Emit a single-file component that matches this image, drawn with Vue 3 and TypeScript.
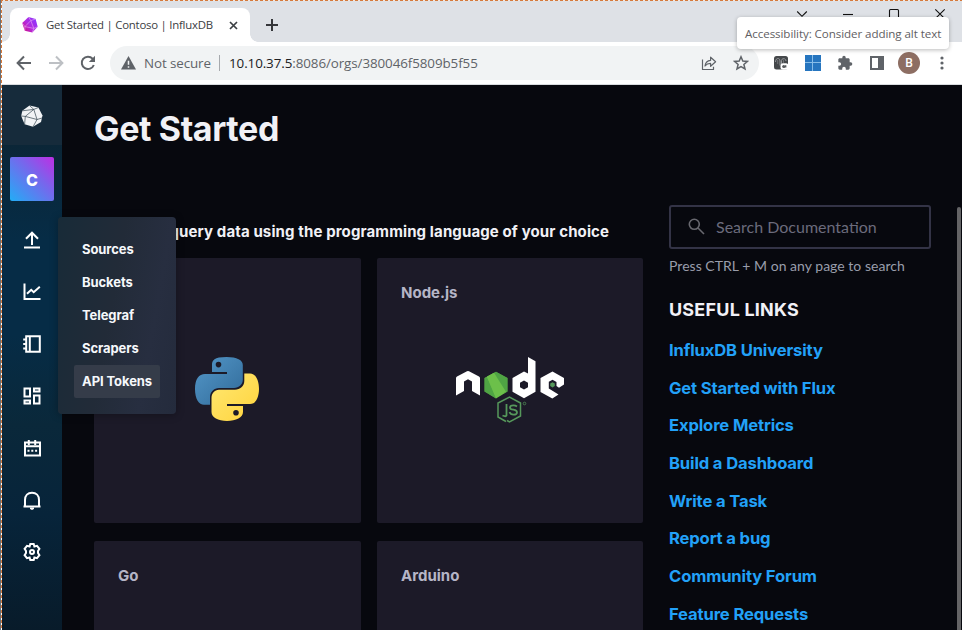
<script setup lang="ts">
const menu = ['Sources', 'Buckets', 'Telegraf', 'Scrapers', 'API Tokens']
const active = 'API Tokens'
const links = [
  'InfluxDB University',
  'Get Started with Flux',
  'Explore Metrics',
  'Build a Dashboard',
  'Write a Task',
  'Report a bug',
  'Community Forum',
  'Feature Requests',
]
</script>

<template>
  <div class="window">
    <header class="tabstrip">
      <div class="tab">
        <svg class="favicon" width="18" height="18" viewBox="0 0 18 18">
          <defs>
            <linearGradient id="fav" x1="0" y1="1" x2="1" y2="0.2">
              <stop offset="0" stop-color="#d30971" />
              <stop offset="0.5" stop-color="#b32be0" />
              <stop offset="1" stop-color="#8a35ff" />
            </linearGradient>
          </defs>
          <path d="M7.5 1 14.6 3 16.7 10.7 11.3 16.5 3.8 14.7 1.2 7Z" fill="url(#fav)" />
          <path d="M7.5 1 9.8 4.6 14.6 3M9.8 4.6 3.9 10.6 1.2 7M3.9 10.6 12.8 12.4 9.8 4.6M12.8 12.4 16.7 10.7M12.8 12.4 11.3 16.5M3.9 10.6 3.8 14.7" fill="none" stroke="#e9a8f5" stroke-width=".6" />
        </svg>
        <span class="tab-title">Get Started | Contoso | InfluxDB</span>
        <svg class="tab-close" width="9" height="9" viewBox="0 0 9 9"><path d="M1 1 8 8M8 1 1 8" stroke="#3c4043" stroke-width="1.7" /></svg>
      </div>
      <svg class="new-tab" width="12" height="12" viewBox="0 0 12 12"><path d="M6 0V12M0 6H12" stroke="#35363a" stroke-width="2" /></svg>
      <div class="controls">
        <svg width="12" height="12" viewBox="0 0 12 12"><path d="M1.2 3.5 6 8.3 10.8 3.5" /></svg>
        <svg width="12" height="12" viewBox="0 0 12 12"><path d="M1 6.5H11" /></svg>
        <svg width="12" height="12" viewBox="0 0 12 12"><rect x="1.5" y="1.5" width="9" height="9" rx="1" /></svg>
        <svg width="12" height="12" viewBox="0 0 12 12"><path d="M1.3 1.3 10.7 10.7M10.7 1.3 1.3 10.7" /></svg>
      </div>
      <div class="tooltip">Accessibility: Consider adding alt text</div>
    </header>

    <div class="toolbar">
      <div class="nav-icons">
        <svg width="16" height="16" viewBox="0 0 16 16"><path d="M15 8H2M8 1.5 1.6 8 8 14.5" fill="none" stroke="#5f6368" stroke-width="2" /></svg>
        <svg width="16" height="16" viewBox="0 0 16 16"><path d="M1 8H14M8 1.5 14.4 8 8 14.5" fill="none" stroke="#bdc0c4" stroke-width="2" /></svg>
        <svg width="16" height="16" viewBox="0 0 16 16"><path d="M13.8 10A6.2 6.2 0 1 1 12.6 3.7L14 5.2" fill="none" stroke="#5f6368" stroke-width="2" /><path d="M15 .8V7H8.8Z" fill="#5f6368" /></svg>
      </div>
      <div class="omnibox">
        <svg width="15" height="14" viewBox="0 0 15 14"><path d="M7.5 0 15 13.5H0Z" fill="#5f6368" /><path d="M7.5 4.8V8.8M7.5 10.2V11.8" stroke="#f1f3f4" stroke-width="1.5" /></svg>
        <span class="insecure">Not secure</span>
        <i class="divider"></i>
        <span class="url"><b>10.10.37.5</b>:8086/orgs/380046f5809b5f55</span>
        <svg class="share" width="16" height="16" viewBox="0 0 16 16"><path d="M1.5 4.5V14.5H12.5V11.8M4 11C4.4 7.5 6.5 5.6 9.6 5.3V2.2L14.6 6.8 9.6 11.3V8.4C7 8.4 5.3 9.3 4 11Z" fill="none" stroke="#5f6368" stroke-width="1.2" stroke-linejoin="round" /></svg>
        <svg class="star" width="16" height="16" viewBox="0 0 16 16"><path d="M8 1.8 9.8 6 14.4 6.4 10.9 9.4 12 13.9 8 11.5 4 13.9 5.1 9.4 1.6 6.4 6.2 6Z" fill="none" stroke="#5f6368" stroke-width="1.5" /></svg>
      </div>
      <div class="extensions">
        <svg width="16" height="16" viewBox="0 0 16 16">
          <rect x="1" y="1" width="14" height="13.5" rx="2.5" fill="#45484b" />
          <path d="M2.5 7C2.5 2.5 7 2.5 7 6V10.5M8.5 10V5.5C8.5 3 13 3 13 6" fill="none" stroke="#95989b" stroke-width="1" />
          <path d="M4.7 5V9M10.5 5V8" stroke="#6f7275" />
          <rect x="7.5" y="8.2" width="8" height="6.6" rx="2.5" fill="#fff" />
          <circle cx="10.7" cy="11.4" r="1.5" fill="#55585b" /><path d="M12 10.3H13.4V12.6H11Z" fill="#55585b" />
        </svg>
        <svg width="16" height="16" viewBox="0 0 16 16"><path d="M0 0H16V16H0Z" fill="#2675bf" /><path d="M7.5 0V16M0 7.5H16" stroke="#86bce8" stroke-width="1" /></svg>
        <svg width="16" height="16" viewBox="0 0 24 24"><path fill="#5f6368" d="M20.5 11H19V7c0-1.1-.9-2-2-2h-4V3.500a2.500 2.500 0 0 0-5 0V5H4c-1.100 0-2 .900-2 2v3.800h1.500a2.700 2.700 0 0 1 0 5.400H2V20c0 1.100.900 2 2 2h3.800v-1.500a2.700 2.700 0 0 1 5.400 0V22H17c1.100 0 2-.900 2-2v-4h1.500a2.500 2.500 0 0 0 0-5z" /></svg>
        <svg width="16" height="16" viewBox="0 0 16 16"><path d="M2 2H14V14H2Z" fill="none" stroke="#5f6368" stroke-width="2" /><path d="M9 2H14V14H9Z" fill="#5f6368" /></svg>
        <span class="avatar">B</span>
        <svg width="4" height="14" viewBox="0 0 4 14" fill="#5f6368"><circle cx="2" cy="2" r="1.6" /><circle cx="2" cy="7" r="1.6" /><circle cx="2" cy="12" r="1.6" /></svg>
      </div>
    </div>

    <div class="app">
      <aside class="sidebar">
        <div class="brand">
          <svg width="24" height="24" viewBox="0 0 24 24">
            <path d="M9.500 1.600 18.400 3.500 22.500 11.500 21 18 13 22.800 4.600 20.300 1.200 12 2.300 6.800Z" fill="#f2f4f6" />
            <path d="M9.500 1.600 13.800 5.400 18.400 3.500M5.300 12.400 1.200 12M2.300 6.800 13.800 5.400 17 15.500 5.300 12.400M5.300 12.400 13.800 5.400M5.300 12.400 4.600 20.300M17 15.500 22 14M17 15.500 13 22.800" fill="none" stroke="#34454f" stroke-width=".7" />
          </svg>
        </div>
        <div class="org">C</div>
        <nav class="rail">
          <svg viewBox="0 0 20 20"><path d="M10 15V3M4 8.700 10 2.700 16 8.700M2 17.500H18" /></svg>
          <svg viewBox="0 0 20 20"><path d="M2.500 1.500V17H18.500M5 11.700 9.200 7.800 11.700 10.200 17.800 4.800" /></svg>
          <svg viewBox="0 0 20 20"><path d="M4.200 2.200H17.800V17.800H4.200ZM7.800 2V18M1.200 5.500H4M1.200 10H4M1.200 14.500H4" /></svg>
          <svg viewBox="0 0 20 20"><path d="M2.500 2.500H8V10.500H2.500ZM12 2.500H17.500V5.500H12ZM12 9.500H17.500V17.500H12ZM2.500 14.500H8V17.500H2.500Z" /></svg>
          <svg viewBox="0 0 20 20"><path d="M3 4.500H18V17.500H3ZM3 8.300H18M6.800 2V7M13.200 2V7" /><path d="M5.500 12.800H7.500M9.300 12.800H11.300M13.100 12.800H15.100" /></svg>
          <svg viewBox="0 0 20 20"><path d="M1.500 16.500H18.500M3 16V10C3 5.500 5.800 2.700 10 2.700S17 5.500 17 10V16" /><path d="M8 17.500H12V18.500L11 19.700H9L8 18.500Z" class="solid" /></svg>
          <svg viewBox="0 0 20 20"><path d="M8.300 2H11.700L12.400 4.500 15 3.900 17.400 6.900 16 9 16 11 17.400 13.100 15 16.100 12.400 15.500 11.700 18H8.300L7.600 15.500 5 16.100 2.600 13.100 4 11 4 9 2.600 6.900 5 3.900 7.600 4.500Z" /><circle cx="10" cy="10" r="2" /></svg>
        </nav>
        <div class="flyout">
          <a v-for="m in menu" :key="m" :class="{ active: m === active }">{{ m }}</a>
        </div>
      </aside>

      <main>
        <h1>Get Started</h1>
        <div class="columns">
          <section class="guides">
            <h2>Write and query data using the programming language of your choice</h2>
            <div class="cards">
              <article class="card">
                <svg class="python" width="64" height="64" viewBox="0 0 64 64">
                  <defs>
                    <linearGradient id="pyb" x1="0" y1="0" x2="1" y2="1"><stop offset="0" stop-color="#5498c9" /><stop offset="1" stop-color="#306998" /></linearGradient>
                    <linearGradient id="pyy" x1="0" y1="0" x2="1" y2="1"><stop offset="0" stop-color="#ffe873" /><stop offset="1" stop-color="#ffd33b" /></linearGradient>
                  </defs>
                  <path fill="url(#pyb)" fill-rule="evenodd" d="M31.600 0C19 0 17 3.500 17 8V15H32V17H10C4 17 0 22 0 32S4 47.800 9 47.800H15V40C15 35 19 31 24 31H39C44 31 47.800 27 47.800 23V8C47.800 3 42 0 31.600 0ZM23.500 4.800A2.800 2.800 0 1 1 23.500 10.400A2.800 2.800 0 1 1 23.500 4.800Z" />
                  <path fill="url(#pyy)" fill-rule="evenodd" d="M49.300 16.500V24C49.300 29 45 32.700 40 32.700H24C19.500 32.700 16.500 36.500 16.500 41V55C16.500 60.500 23 64 32 64S48 60.500 48 55V49H32V47H55C61 47 64 40 64 32S61 16.500 55 16.500ZM41 53A2.800 2.800 0 1 1 41 58.600A2.800 2.800 0 1 1 41 53Z" />
                </svg>
              </article>
              <article class="card">
                <h3>Node.js</h3>
                <svg class="node" width="110" height="68" viewBox="0 0 110 68">
                  <path fill="#fff" d="M0 38.500V21Q0 20 1 19.400L11 14.300Q12 13.800 13 14.300L23 19.400Q24 20 24 21V38.500L16 34V24.500L12 22.300 8 24.500V34Z" />
                  <path fill="#6cc04a" d="M40 14.800 51.500 21V34.500L40 41.500 28.500 34.500V21Z" />
                  <path fill="#409541" d="M28.500 21 31 20 40 41.500 28.500 34.500ZM40 14.800 51.500 21V34.500L48 36.500 36 17Z" opacity=".65" />
                  <path fill="#6cc04a" d="M31 19.500 38 15.800 50 34.800 40 40.500Z" />
                  <path fill="#fff" fill-rule="evenodd" d="M72 0 79.500 4.300V34.700L68 41.300 56.500 34.700V21L68 14.500 72 16.500ZM68 23.500 64 25.700V30.300L68 32.600 72 30.300V25.700Z" />
                  <path fill="#fff" d="M96.500 14.500 108 21V27.500L103 30.800 100.500 29V25L96.500 22.700 92.800 24.800V31.500L102.500 37.500 96.300 41.500 84.500 35V21Z" />
                  <path fill="#56985b" d="M96.500 25.300 98.800 26.500V29L96.500 30.400 94.200 29V26.500Z" />
                  <path fill="none" stroke="#56985b" stroke-width="1.500" d="M50 64.500 42 60V46L53.500 40 64.500 46V59L53.500 65 51 63.500" />
                  <path fill="none" stroke="#56985b" stroke-width="1.800" d="M50.500 47V58.500Q50 60 46.500 58.500M61 49.500Q59.500 48.300 57.500 48.300 54 48.300 54 50.400 54 52.300 57.500 52.700 61 53.200 61 55.400 61 57.600 57.500 57.600 54.500 57.600 53.500 55" />
                  <circle cx="68.500" cy="46.500" r="1.300" fill="none" stroke="#56985b" stroke-width=".7" />
                </svg>
              </article>
              <article class="card"><h3>Go</h3></article>
              <article class="card"><h3>Arduino</h3></article>
            </div>
          </section>
          <section class="help">
            <div class="search">
              <svg width="17" height="17" viewBox="0 0 17 17"><circle cx="6.300" cy="6.300" r="5" /><path d="M10 10 16 16" /></svg>
              <span>Search Documentation</span>
            </div>
            <p>Press CTRL + M on any page to search</p>
            <h4>USEFUL LINKS</h4>
            <ul>
              <li v-for="l in links" :key="l"><a>{{ l }}</a></li>
            </ul>
          </section>
        </div>
        <i class="scrollbar"></i>
      </main>
    </div>
    <i class="edge-top"></i>
    <i class="edge-left"></i>
  </div>
</template>

<style>
body { overflow: hidden; }
</style>

<style scoped>
* { box-sizing: border-box; }
.window { position: relative; width: 962px; height: 630px; overflow: hidden; background: #07080e; display: flex; flex-direction: column; }
svg { display: block; flex: none; }

.tabstrip { position: relative; height: 42px; flex: none; background: #dee1e6; display: flex; align-items: flex-end; padding-left: 10px; font-family: "Open Sans", sans-serif; }
.tab { position: relative; width: 240px; height: 34px; background: #fff; border-radius: 8px 8px 0 0; display: flex; align-items: center; padding: 0 12px 0 11px; }
.tab::before, .tab::after { content: ""; position: absolute; bottom: 0; width: 8px; height: 8px; }
.tab::before { left: -8px; background: radial-gradient(circle at 0 0, transparent 7.5px, #fff 8px); }
.tab::after { right: -8px; background: radial-gradient(circle at 100% 0, transparent 7.5px, #fff 8px); }
.tab-title { margin-left: 7px; font-size: 11.4px; letter-spacing: -0.235px; color: #3c4043; white-space: nowrap; line-height: 16px; }
.tab-close { margin-left: auto; }
.new-tab { margin: 0 0 11px 16px; }
.controls { margin-left: auto; display: flex; gap: 34px; padding: 0 16px 22px 0; fill: none; stroke: #111; stroke-width: 1.1; }
.tooltip { position: absolute; z-index: 3; left: 737px; top: 17px; width: 212px; height: 32px; border-radius: 4px; background: #fff; box-shadow: 0 1px 4px rgba(0, 0, 0, .28); padding-left: 8px; font-size: 11.6px; letter-spacing: -0.08px; line-height: 33px; color: #5f6063; white-space: nowrap; }

.toolbar { height: 43px; flex: none; background: #fff; border-bottom: 1px solid #d9dcdf; display: flex; align-items: center; padding-left: 16px; font-family: "Open Sans", sans-serif; }
.nav-icons { display: flex; flex: none; gap: 16px; width: 94px; }
.omnibox { flex: none; width: 649px; height: 34px; border-radius: 17px; background: #f1f3f4; display: flex; align-items: center; padding: 0 10px 0 11px; font-size: 13.4px; color: #5f6368; white-space: nowrap; }
.insecure { margin-left: 8px; width: 67px; letter-spacing: -0.1px; }
.divider { width: 1px; height: 16px; background: #a6a9ad; margin: 0 9px 0 8px; }
.url { letter-spacing: -0.09px; }
.url b { font-weight: 400; color: #202124; }
.share { margin-left: auto; }
.star { margin-left: 16px; }
.extensions { display: flex; align-items: center; gap: 16px; padding-left: 14px; }
.avatar { flex: none; width: 22px; height: 22px; margin-left: -3px; border-radius: 50%; background: #8d6e63; color: #fff; font: 500 12px/22px Roboto, sans-serif; text-align: center; }
.extensions svg:last-child { margin-left: 4px; }

.app { flex: 1; display: flex; min-height: 0; font-family: Inter, sans-serif; }
.sidebar { position: relative; z-index: 2; width: 62px; flex: none; padding-left: 2px; background: linear-gradient(#0b2637 0, #0b2637 60px, #062c46 155px, #062c46 250px, #0a283a 340px, #07243a 430px, #081b2a 100%); display: flex; flex-direction: column; align-items: center; }
.brand { width: 60px; height: 60px; background: #162b3b; display: flex; align-items: center; justify-content: center; padding-top: 2px; }
.org { margin-top: 12px; width: 44px; height: 44px; border-radius: 2px; background: linear-gradient(45deg, #22adf6, #7965ec 60%, #be2ee4); color: #fff; font-size: 16px; font-weight: 800; line-height: 46px; text-align: center; }
.rail { margin-top: 29px; display: flex; flex-direction: column; gap: 32px; }
.rail svg { width: 20px; height: 20px; fill: none; stroke: #fff; stroke-width: 2; }
.rail .solid { fill: #fff; stroke: none; }
.flyout { position: absolute; left: 58px; top: 132px; width: 118px; height: 197px; padding: 16px; border-radius: 4px; background: linear-gradient(100deg, #182b38 0, #222b38 45%, #272e40 75%, #242b3c); box-shadow: 0 1px 8px rgba(0, 0, 0, .3); display: flex; flex-direction: column; }
.flyout a { height: 33px; padding-left: 8px; border-radius: 2px; line-height: 33px; font-size: 13px; font-weight: 700; color: #f6f8fb; white-space: nowrap; letter-spacing: -0.08px; }
.flyout .active { background: #353c49; }

main { position: relative; flex: 1; min-width: 0; padding: 24px 31px 0 32px; }
h1 { margin: 0; height: 40px; font-size: 34px; line-height: 40px; font-weight: 700; letter-spacing: -0.38px; color: #f1f1f6; }
.columns { display: flex; gap: 26px; margin-top: 56px; }
.guides { width: 549px; padding-top: 16px; }
h2 { margin: 0; font-size: 15px; line-height: 21px; letter-spacing: 0.12px; font-weight: 700; color: #f1f1f6; white-space: nowrap; }
.cards { margin-top: 16px; display: grid; grid-template-columns: 267px 266px; grid-auto-rows: 265px; gap: 18px 16px; }
.card { background: #1c1a28; border-radius: 2px; padding: 24px; }
h3 { margin: 0; font-size: 15px; line-height: 22px; font-weight: 700; color: #b5b5c6; }
.python { margin: 75px 0 0 77px; }
.node { margin: 53px 0 0 55px; }
.help { width: 262px; }
.search { height: 44px; border: 2px solid #333346; border-radius: 3px; display: flex; align-items: center; padding: 0 0 2px 17px; gap: 11px; font: 16px Lato, sans-serif; color: #6b6b7c; }
.search svg { fill: none; stroke: #68686f; stroke-width: 1.6; }
.help p { margin: 7px 0 0; font: 14px/20px Lato, sans-serif; letter-spacing: 0.03px; color: #999dab; white-space: nowrap; }
h4 { margin: 22px 0 0; font-size: 18px; line-height: 24px; font-weight: 700; letter-spacing: 0.2px; color: #f1f1f6; }
ul { list-style: none; margin: 9px 0 0; padding: 0; }
li { height: 37.7px; line-height: 38px; font-size: 16.6px; font-weight: 700; letter-spacing: -0.14px; color: #22a1f8; white-space: nowrap; }
.scrollbar { position: absolute; right: 1px; top: 122px; width: 4px; height: 440px; border-radius: 2px; background: #646466; }

.edge-top, .edge-left { position: absolute; z-index: 5; left: 0; top: 0; }
.edge-top { width: 100%; height: 1px; background: repeating-linear-gradient(90deg, #d57a3c 0 3px, #f4e6dc 3px 5px); }
.edge-left { width: 2px; height: 100%; background: linear-gradient(90deg, #6b6f75 1px, transparent 1px), repeating-linear-gradient(#d57a3c 0 3px, #fff 3px 5px); }
</style>
